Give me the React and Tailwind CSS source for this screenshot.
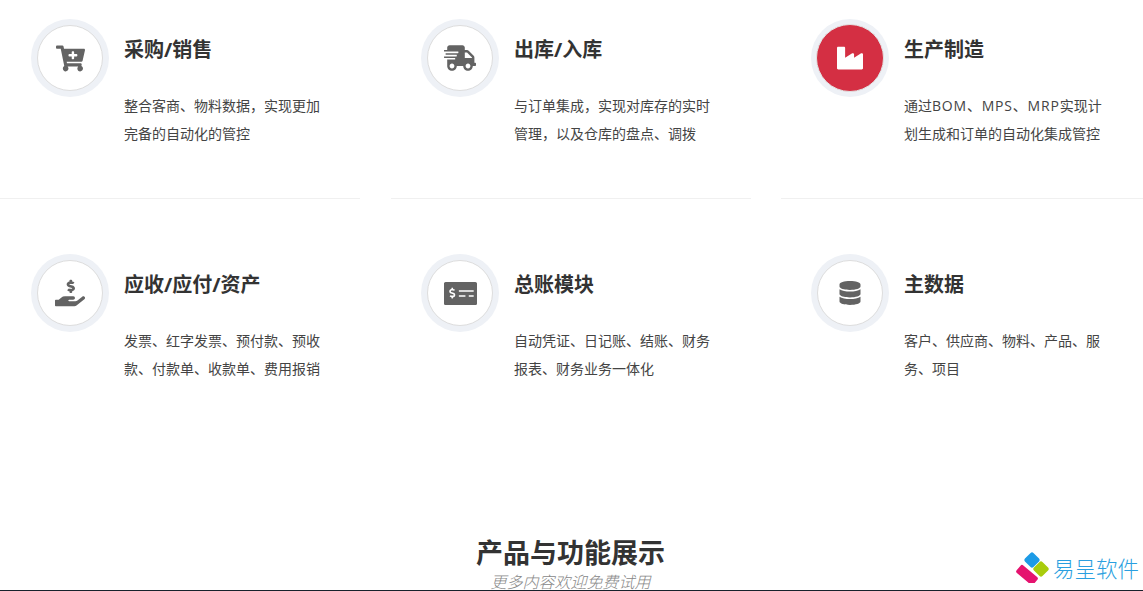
import React from "react";
import {
  FaCartPlus,
  FaShippingFast,
  FaIndustry,
  FaHandHoldingUsd,
  FaMoneyCheckAlt,
  FaDatabase,
} from "react-icons/fa";

const font = "font-['Open_Sans','Noto_Sans_CJK_SC',sans-serif]";

function Feature({ Icon, size, title, lines, active }) {
  return (
    <div className="flex w-[390px] shrink-0 pl-[31px]">
      <div className={active ? "w-[78px] h-[78px] shrink-0 rounded-full bg-[#eef1f6] p-[5px]" : "w-[78px] h-[78px] shrink-0 rounded-full bg-[#eef1f6] p-[6px]"}>
        <div
          className={
            active
              ? "w-full h-full rounded-full border border-[#e2e2e2] bg-[#d42f43] text-white flex items-center justify-center"
              : "w-full h-full rounded-full border border-[#dddddd] bg-white text-[#636363] flex items-center justify-center"
          }
        >
          <Icon size={size} />
        </div>
      </div>
      <div className="ml-[15px] w-[210px]">
        <h3 className="text-[20px] leading-[30px] mt-[16px] font-bold text-[#333333]">{title}</h3>
        <p className="mt-[27px] text-[14px] leading-[28px] text-[#444444] whitespace-nowrap">
          {lines[0]}
          <br />
          {lines[1]}
        </p>
      </div>
    </div>
  );
}

export default function App() {
  return (
    <div className={`relative w-[1143px] h-[591px] overflow-hidden bg-white ${font}`}>
      <div className="flex pt-[19px] h-[198px]">
        <Feature
          Icon={FaCartPlus}
          size={29}
          title="采购/销售"
          lines={["整合客商、物料数据，实现更加", "完备的自动化的管控"]}
        />
        <Feature
          Icon={FaShippingFast}
          size={32}
          title="出库/入库"
          lines={["与订单集成，实现对库存的实时", "管理，以及仓库的盘点、调拨"]}
        />
        <Feature
          Icon={FaIndustry}
          size={26}
          title="生产制造"
          active
          lines={[
            <>
              通过<span className="tracking-[0.8px]">BOM、MPS、MRP</span>实现计
            </>,
            "划生成和订单的自动化集成管控",
          ]}
        />
      </div>

      <div className="flex h-px">
        <div className="w-[360px] bg-[#f0f0f0]" />
        <div className="w-[360px] ml-[31px] bg-[#f0f0f0]" />
        <div className="w-[362px] ml-[30px] bg-[#f0f0f0]" />
      </div>

      <div className="flex pt-[55px] h-[334px]">
        <Feature
          Icon={FaHandHoldingUsd}
          size={30}
          title="应收/应付/资产"
          lines={["发票、红字发票、预付款、预收", "款、付款单、收款单、费用报销"]}
        />
        <Feature
          Icon={FaMoneyCheckAlt}
          size={33}
          title="总账模块"
          lines={["自动凭证、日记账、结账、财务", "报表、财务业务一体化"]}
        />
        <Feature
          Icon={FaDatabase}
          size={24}
          title="主数据"
          lines={["客户、供应商、物料、产品、服", "务、项目"]}
        />
      </div>

      <div className="text-center pr-[2px]">
        <h2 className="text-[27px] leading-[40px] font-bold text-[#333333]">产品与功能展示</h2>
        <p className="text-[16px] leading-[22px] mt-[-2px] italic font-light text-[#888888]">更多内容欢迎免费试用</p>
      </div>

      <div className="absolute left-0 right-0 bottom-0 h-px bg-[#17212b]" />

      <div className="absolute right-[4px] bottom-[4px] flex items-center">
        <svg className="mb-[4px]" width="34" height="32" viewBox="0 0 34 32">
          <rect x="11" y="3" width="12" height="12" rx="2" fill="#1d9be6" transform="rotate(45 17 9)" />
          <rect x="20" y="12" width="12" height="12" rx="2" fill="#a9cc0c" transform="rotate(45 26 18)" />
          <rect x="1" y="19" width="22" height="10" rx="2" fill="#e5136f" transform="rotate(40 12 24)" />
        </svg>
        <span className="ml-[4px] text-[21.5px] leading-[28px] font-light text-[#2a9fe0]">易呈软件</span>
      </div>
    </div>
  );
}
